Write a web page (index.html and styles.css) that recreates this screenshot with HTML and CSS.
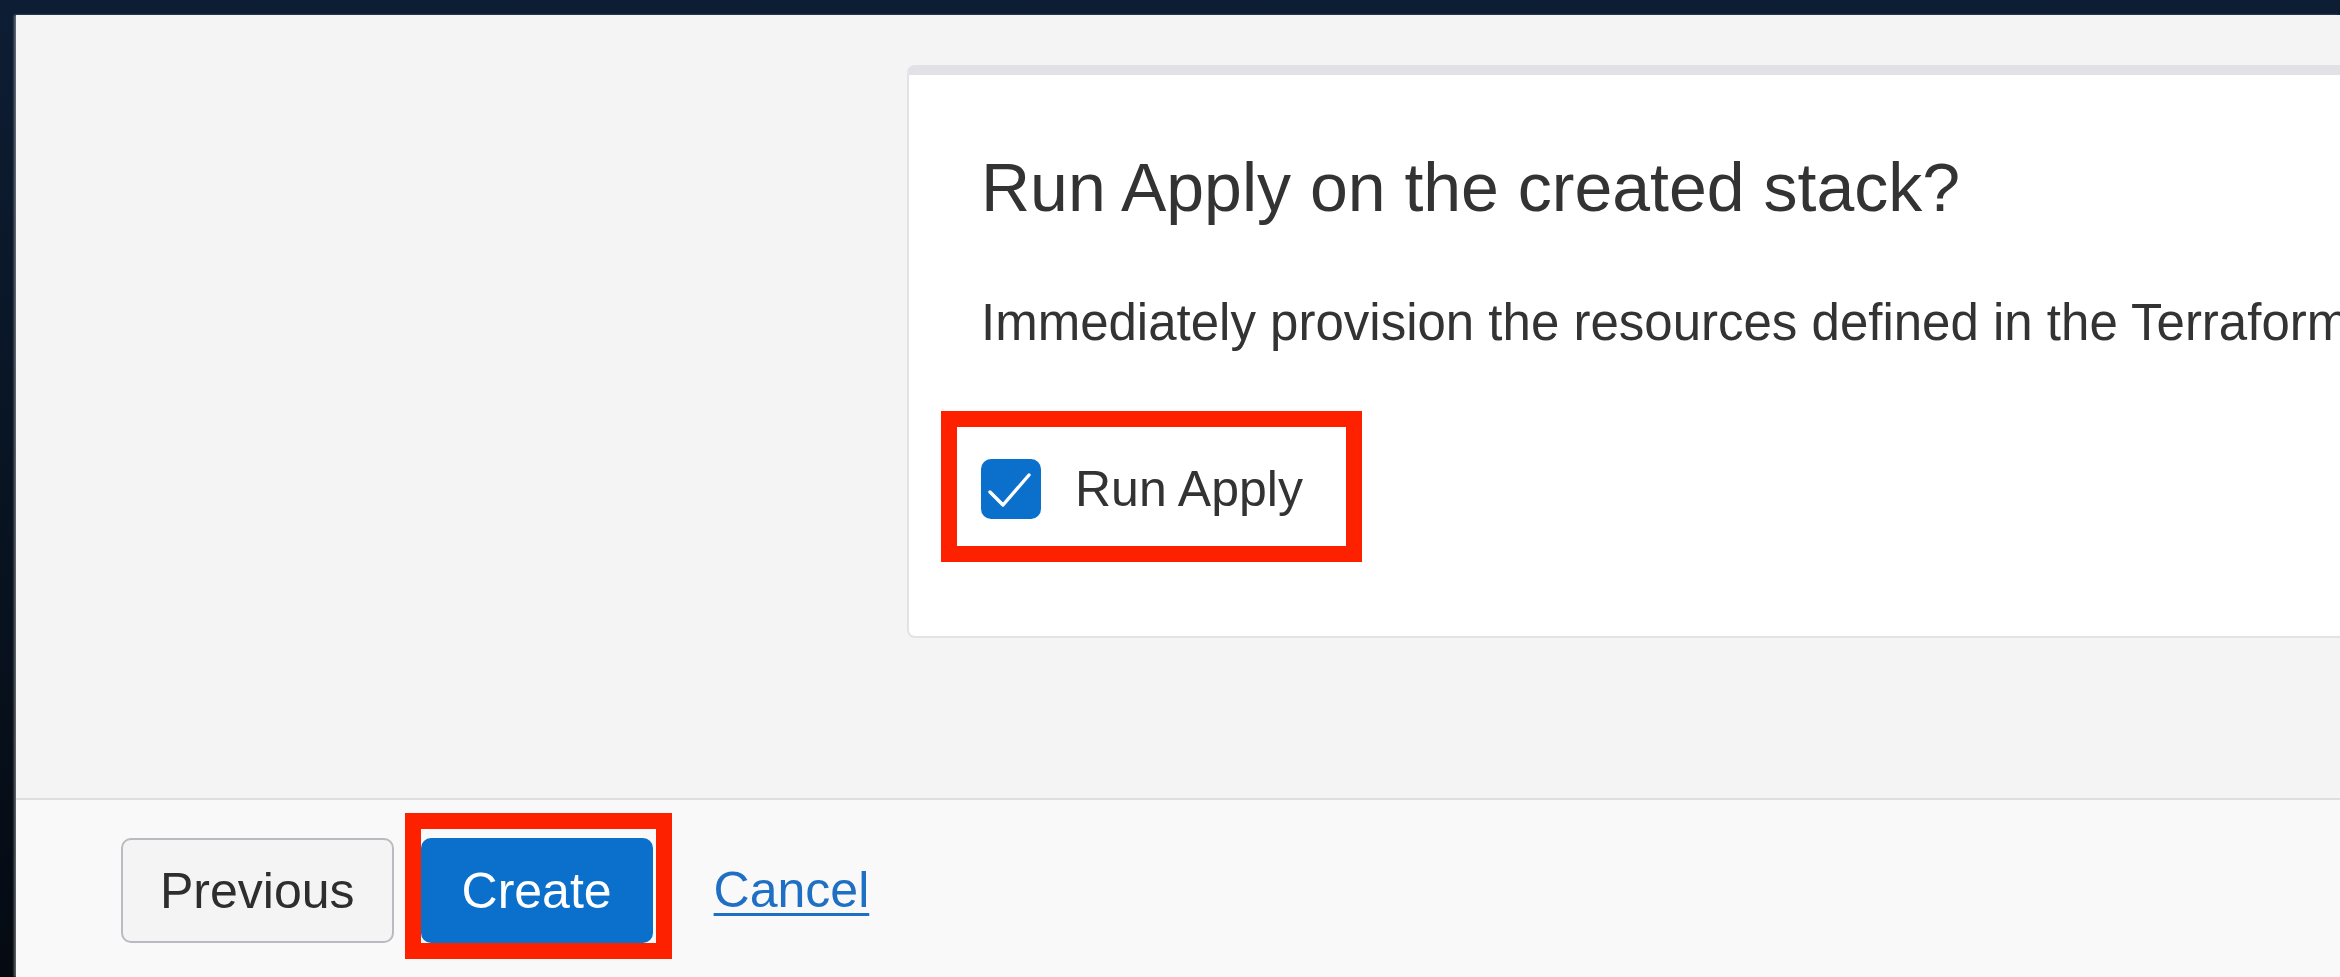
FILE: index.html
```html
<!DOCTYPE html>
<html lang="en">
<head>
<meta charset="utf-8">
<title>Create Stack – Review</title>
<link rel="stylesheet" href="styles.css">
</head>
<body>
  <div class="window">
    <main class="content">
      <section class="card">
        <h2 class="card-title">Run Apply on the created stack?</h2>
        <p class="card-text">Immediately provision the resources defined in the Terraform configuration. This operation might take several minutes.</p>
        <label class="check-row">
          <span class="checkbox" aria-checked="true" role="checkbox">
            <svg viewBox="0 0 60 60" width="60" height="60">
              <path d="M9 33 L22 46 L48 16" fill="none" stroke="#ffffff" stroke-width="3.4" stroke-linecap="round" stroke-linejoin="round"/>
            </svg>
          </span>
          <span class="check-label">Run Apply</span>
          <span class="callout callout-check"></span>
        </label>
      </section>
    </main>
    <footer class="footer">
      <button class="btn btn-secondary" type="button">Previous</button>
      <span class="btn-wrap">
        <button class="btn btn-primary" type="button">Create</button>
        <span class="callout callout-create"></span>
      </span>
      <a class="link" href="#">Cancel</a>
    </footer>
  </div>
</body>
</html>
```

FILE: styles.css
```css
html, body {
  margin: 0;
  padding: 0;
}

body {
  width: 2340px;
  height: 977px;
  overflow: hidden;
  background: linear-gradient(180deg, #0d1d33 0%, #08121f 60%, #050a12 100%);
  font-family: "Liberation Sans", Helvetica, Arial, sans-serif;
  color: #333333;
}

.window {
  margin: 15px 0 0 16px;
  height: 962px;
  display: flex;
  flex-direction: column;
  overflow: hidden;
  box-shadow: -2px 0 2px rgba(170, 170, 170, 0.55);
}

/* main scrolling area */
.content {
  flex: 1;
  background: #f4f4f4;
  padding: 50px 0 0 891px;
  overflow: hidden;
}

.card {
  width: 1700px;
  box-sizing: border-box;
  background: #ffffff;
  border: 2px solid #e3e3e7;
  border-top: 10px solid #e1e1e6;
  border-radius: 8px;
  padding: 72px 72px 113px 72px;
}

.card-title {
  margin: 0;
  font-size: 68px;
  line-height: 80px;
  font-weight: 400;
  color: #333333;
  white-space: nowrap;
}

.card-text {
  margin: 65px 0 0;
  font-size: 51px;
  line-height: 62px;
  color: #333333;
  white-space: nowrap;
}

.check-row {
  position: relative;
  margin-top: 104px;
  display: inline-flex;
  align-items: center;
  gap: 34px;
  height: 62px;
}

.checkbox {
  width: 60px;
  height: 60px;
  border-radius: 10px;
  background: #0b6fcc;
  display: block;
}

.checkbox svg {
  display: block;
}

.check-label {
  font-size: 50px;
  line-height: 62px;
  color: #333333;
}

/* red highlight frames drawn over controls */
.callout {
  position: absolute;
  box-sizing: border-box;
  border: 16px solid #fe2100;
  pointer-events: none;
}

.callout-check {
  left: -40px;
  top: -47px;
  width: 421px;
  height: 151px;
}

.footer {
  height: 179px;
  box-sizing: border-box;
  border-top: 2px solid #dedede;
  background: #f9f9f9;
  padding: 38px 0 0 105px;
  display: flex;
  align-items: flex-start;
}

.btn {
  font-family: "Liberation Sans", Helvetica, Arial, sans-serif;
  font-size: 50px;
  line-height: 60px;
  height: 105px;
  padding: 0 37px;
  border-radius: 10px;
  cursor: pointer;
}

.btn-secondary {
  background: #f4f4f4;
  color: #2e2e2e;
  border: 2px solid #b8bbc0;
}

.btn-wrap {
  position: relative;
  margin-left: 27px;
  display: block;
}

.btn-primary {
  display: block;
  background: #0b6fcc;
  color: #ffffff;
  border: 2px solid #0b6fcc;
  padding: 0 39px;
}

.callout-create {
  left: -16px;
  top: -25px;
  right: -19px;
  bottom: -16px;
}

.link {
  margin-left: 61px;
  font-size: 50px;
  line-height: 105px;
  color: #1f6fc5;
  text-decoration: underline;
  text-decoration-thickness: 3px;
  text-underline-offset: 6px;
}
```
